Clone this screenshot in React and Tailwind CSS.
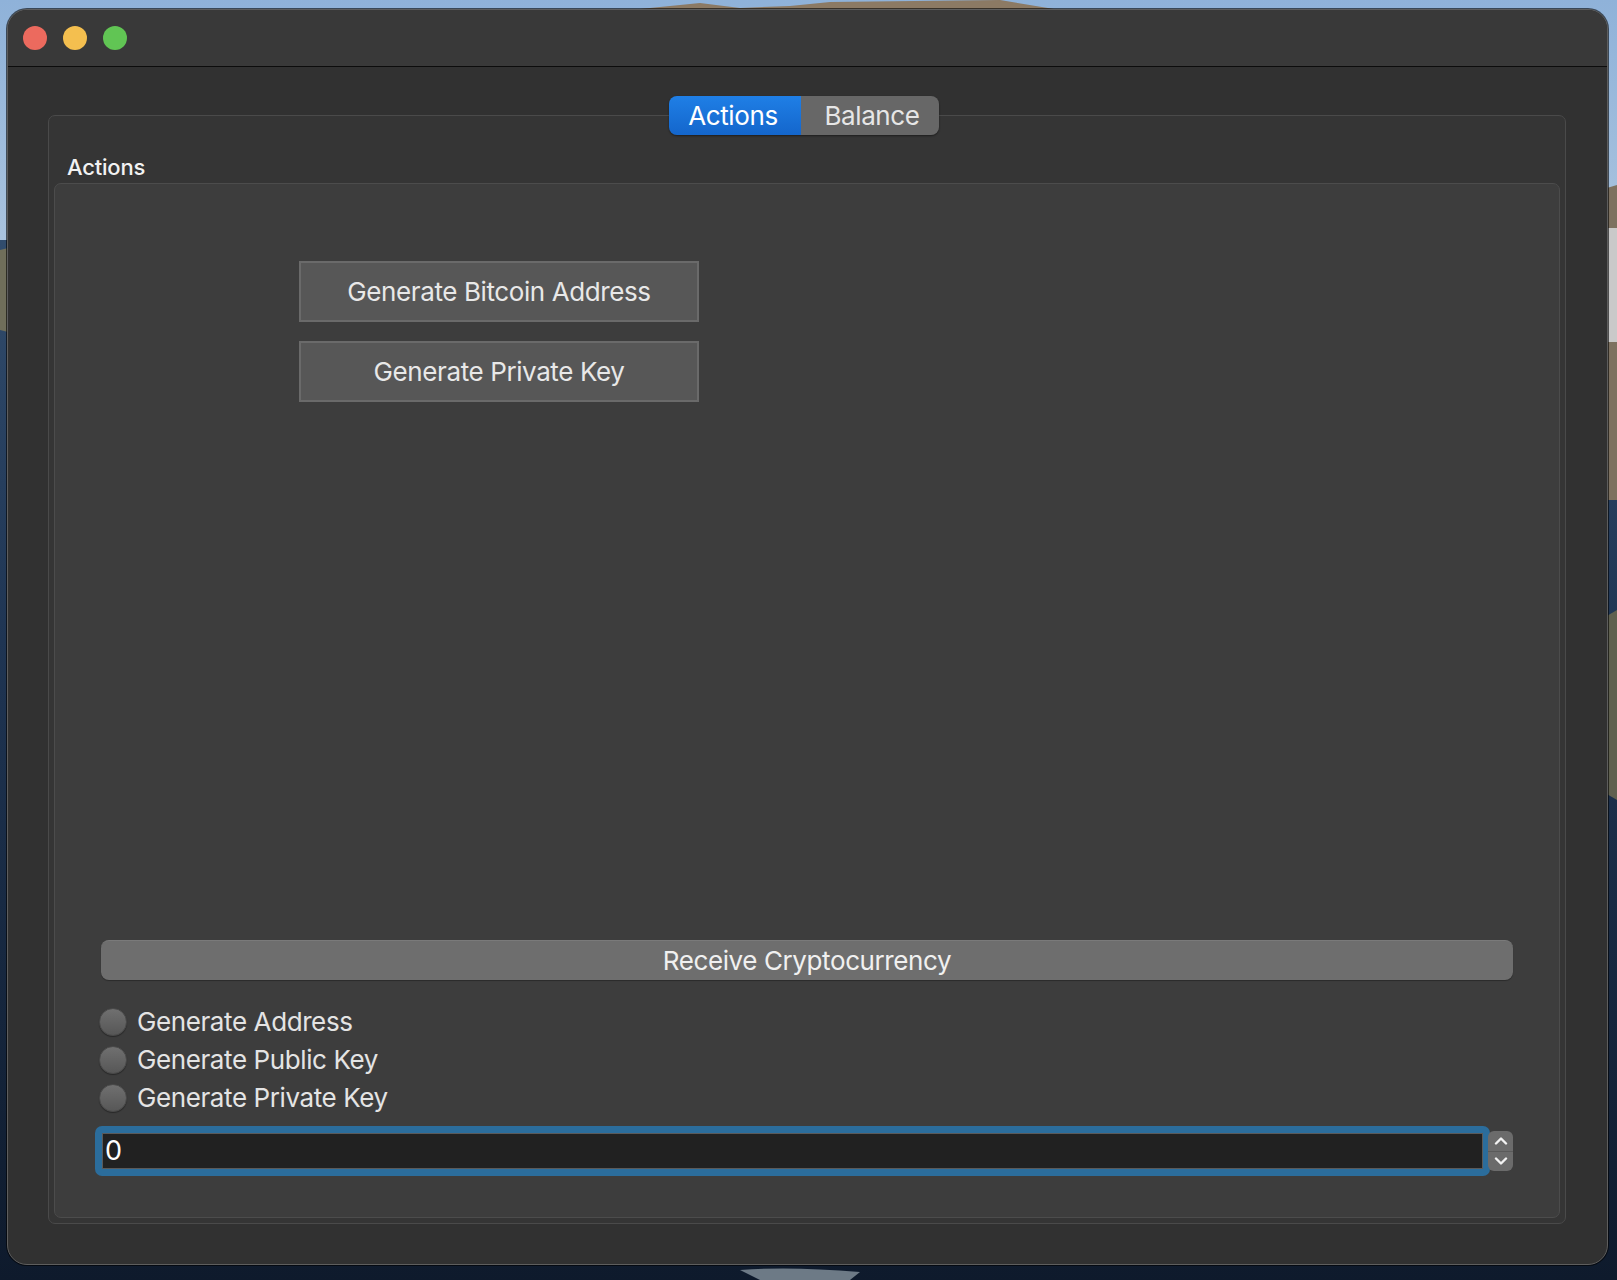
import React from "react";

function Wallpaper() {
  return (
    <svg className="absolute inset-0" width="1617" height="1280" viewBox="0 0 1617 1280">
      <defs>
        <linearGradient id="sky" x1="0" y1="0" x2="0" y2="1">
          <stop offset="0" stopColor="#8fb2d9" />
          <stop offset="1" stopColor="#a9c3de" />
        </linearGradient>
        <linearGradient id="sea" x1="0" y1="0" x2="0" y2="1">
          <stop offset="0" stopColor="#3c5a7c" />
          <stop offset="0.5" stopColor="#1f3553" />
          <stop offset="1" stopColor="#0e1a2c" />
        </linearGradient>
      </defs>
      <rect x="0" y="0" width="1617" height="1280" fill="url(#sea)" />
      <rect x="0" y="0" width="1617" height="240" fill="url(#sky)" />
      <path d="M630 10 L680 5 L700 3 L740 8 L790 6 L830 2 L1000 0 L1060 10 Z" fill="#8c7a64" />
      <path d="M0 250 L20 245 L20 335 L0 330 Z" fill="#6f6e5a" />
      <path d="M1600 190 L1617 185 L1617 500 L1600 500 Z" fill="#7d7160" />
      <rect x="1600" y="228" width="17" height="114" fill="#c9c9c9" />
      <path d="M1600 620 L1617 610 L1617 800 L1600 790 Z" fill="#5f604f" />
      <path d="M740 1270 Q790 1266 860 1272 L850 1280 L760 1280 Z" fill="#6d7a86" />
    </svg>
  );
}

function Chevron({ up }) {
  return (
    <svg width="14" height="9" viewBox="0 0 14 9">
      <path
        d={up ? "M2 7.5 L7 2.5 L12 7.5" : "M2 1.5 L7 6.5 L12 1.5"}
        fill="none"
        stroke="#f2f2f2"
        strokeWidth="2.4"
        strokeLinecap="round"
        strokeLinejoin="round"
      />
    </svg>
  );
}

function Radio({ label }) {
  return (
    <div className="flex h-[38px] items-center">
      <div className="h-[28px] w-[28px] rounded-full border border-[#4a4a4a] bg-gradient-to-b from-[#707070] to-[#575757] shadow-[0_1px_1px_rgba(0,0,0,0.35)]" />
      <span className="ml-[10px] text-[26px] leading-[38px] tracking-[-0.4px] text-[#e4e4e4]">{label}</span>
    </div>
  );
}

export default function App() {
  return (
    <div
      className="relative h-[1280px] w-[1617px] overflow-hidden"
      style={{ fontFamily: "Inter, 'Noto Sans', 'Liberation Sans', sans-serif" }}
    >
      <Wallpaper />
      <div className="relative pl-[7px] pt-[9px]">
        <div className="flex h-[1256px] w-[1601px] flex-col overflow-hidden rounded-[20px] border border-[#5e5e5e] bg-[#313131] shadow-[0_0_0_1px_rgba(0,0,0,0.6)]">
          {/* Title bar */}
          <div className="flex h-[57px] shrink-0 items-center gap-[16px] border-b border-[#0c0c0c] bg-[#393939] pl-[15px]">
            <div className="h-[24px] w-[24px] rounded-full bg-[#ec6a5e]" />
            <div className="h-[24px] w-[24px] rounded-full bg-[#f4bf4f]" />
            <div className="h-[24px] w-[24px] rounded-full bg-[#61c554]" />
          </div>

          {/* Body */}
          <div className="flex flex-1 flex-col pb-[40px] pl-[40px] pr-[41px] pt-[48px]">
            <div className="relative flex flex-1 flex-col rounded-[7px] border border-[#4a4a4a] bg-[#353535] px-[5px] pb-[5px]">
              {/* Segmented tabs */}
              <div className="absolute left-1/2 top-[-20px] ml-[-3px] flex h-[39px] -translate-x-1/2 overflow-hidden rounded-[8px] shadow-[0_1px_2px_rgba(0,0,0,0.45)]">
                <div className="flex w-[132px] items-center justify-center bg-gradient-to-b from-[#1f7fe6] to-[#1466cc] pr-[4px] text-[26px] tracking-[-0.4px] text-white">
                  Actions
                </div>
                <div className="flex w-[138px] items-center justify-center bg-[#676767] pl-[4px] text-[26px] tracking-[-0.4px] text-[#e6e6e6]">
                  Balance
                </div>
              </div>

              <div className="pb-[3px] pl-[13px] pt-[38px] text-[22px] font-medium leading-[26px] tracking-[-0.2px] text-[#f2f2f2]">Actions</div>

              {/* Inner frame */}
              <div className="flex flex-1 flex-col rounded-[7px] border border-[#4c4c4c] bg-[#3d3d3d]">
                <div className="flex flex-col gap-[19px] pl-[244px] pt-[77px]">
                  <button className="flex h-[61px] w-[400px] items-center justify-center border-2 border-[#6a6a6a] bg-[#575757] text-[26px] tracking-[-0.4px] text-[#e8e8e8]">
                    Generate Bitcoin Address
                  </button>
                  <button className="flex h-[61px] w-[400px] items-center justify-center border-2 border-[#6a6a6a] bg-[#575757] text-[26px] tracking-[-0.4px] text-[#e8e8e8]">
                    Generate Private Key
                  </button>
                </div>

                <div className="flex-1" />

                <div className="flex flex-col px-[46px] pb-[41px]">
                  <div className="flex h-[40px] items-center justify-center rounded-[8px] border-t border-[#7a7a7a] bg-[#6e6e6e] text-[26px] tracking-[-0.4px] text-[#f0f0f0] shadow-[0_1px_1px_rgba(0,0,0,0.3)]">
                    Receive Cryptocurrency
                  </div>

                  <div className="ml-[-2px] mt-[23px] flex flex-col">
                    <Radio label="Generate Address" />
                    <Radio label="Generate Public Key" />
                    <Radio label="Generate Private Key" />
                  </div>

                  <div className="ml-[-6px] mt-[9px] flex items-center">
                    <div className="h-[50px] w-[1396px] rounded-[7px] bg-[#2b6d9c] p-[7px]">
                      <div className="flex h-[36px] items-center border border-[#5a5a5a] bg-[#212121] pl-[2px] text-[27px] text-white">
                        0
                      </div>
                    </div>
                    <div className="ml-[-2px] flex h-[40px] w-[25px] flex-col overflow-hidden rounded-[6px] bg-[#6b6b6b]">
                      <div className="flex flex-1 items-center justify-center border-b border-[#5a5a5a]">
                        <Chevron up />
                      </div>
                      <div className="flex flex-1 items-center justify-center">
                        <Chevron />
                      </div>
                    </div>
                  </div>
                </div>
              </div>
            </div>
          </div>
        </div>
      </div>
    </div>
  );
}
